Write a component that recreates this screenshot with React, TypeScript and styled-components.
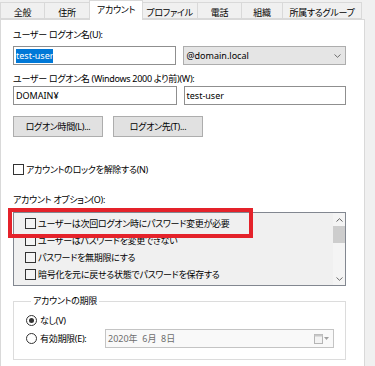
import React from 'react';
import styled, { createGlobalStyle } from 'styled-components';

const Global = createGlobalStyle`
  html, body { margin: 0; padding: 0; background: #f0f0f0; }
  body {
    font-family: "Noto Sans", "Noto Sans CJK JP", sans-serif;
    font-size: 9px;
    color: #000;
    font-feature-settings: "palt";
    letter-spacing: -0.3px;
  }
  * { box-sizing: border-box; }
`;

const Window = styled.div`
  width: 375px;
  height: 366px;
  overflow: hidden;
  background: #f0f0f0;
  display: flex;
  flex-direction: column;
`;

const TabStrip = styled.div`
  display: flex;
  align-items: flex-end;
  height: 19px;
  width: 365px;
  position: relative;
  z-index: 2;
`;

const Tab = styled.div<{ $w: number; $active?: boolean; $first?: boolean }>`
  width: ${(p) => p.$w}px;
  flex: none;
  height: ${(p) => (p.$active ? 20 : 17)}px;
  margin: 0 ${(p) => (p.$active ? -1 : 0)}px ${(p) => (p.$active ? -1 : 0)}px;
  padding-top: ${(p) => (p.$active ? 3 : 4)}px;
  line-height: 12px;
  text-align: center;
  white-space: nowrap;
  position: relative;
  z-index: ${(p) => (p.$active ? 1 : 0)};
  background: ${(p) => (p.$active ? '#fff' : '#f0f0f0')};
  border: 1px solid #d9d9d9;
  border-bottom: ${(p) => (p.$active ? 'none' : '1px solid #d9d9d9')};
  border-left: ${(p) => (p.$first || p.$active ? '1px solid #d9d9d9' : 'none')};
`;

const Panel = styled.div`
  position: relative;
  width: 365px;
  flex: 1;
  background: #fff;
  border: 1px solid #d9d9d9;
  border-bottom: none;
  padding: 9px 18px 0 12px;
  display: flex;
  flex-direction: column;
`;

const Label = styled.div<{ $mt?: number }>`
  line-height: 12px;
  height: 12px;
  margin-top: ${(p) => p.$mt ?? 0}px;
  white-space: nowrap;
`;

const Row = styled.div<{ $mt?: number; $gap?: number }>`
  display: flex;
  align-items: center;
  gap: ${(p) => p.$gap ?? 7}px;
  margin-top: ${(p) => p.$mt ?? 0}px;
`;

const TextBox = styled.div<{ $w: number }>`
  width: ${(p) => p.$w}px;
  height: 19px;
  border: 1px solid #8f8f8f;
  background: #fff;
  padding-left: 2px;
  display: flex;
  align-items: center;
  white-space: nowrap;
  letter-spacing: 0;
`;

const Selected = styled.span`
  background: #0078d7;
  color: #fff;
  line-height: 14px;
`;

const Combo = styled.div`
  width: 163px;
  height: 19px;
  border: 1px solid #adadad;
  background: #e5e5e5;
  padding: 0 4px 0 2px;
  display: flex;
  align-items: center;
  justify-content: space-between;
  letter-spacing: 0;
`;

const Button = styled.div`
  width: 90px;
  height: 21px;
  border: 1px solid #adadad;
  background: #e1e1e1;
  display: flex;
  align-items: center;
  justify-content: center;
  white-space: nowrap;
`;

const CheckRow = styled.div<{ $mt?: number }>`
  display: flex;
  align-items: center;
  gap: 2px;
  height: 13px;
  margin-top: ${(p) => p.$mt ?? 0}px;
  white-space: nowrap;
`;

const Box = styled.span`
  width: 11px;
  height: 11px;
  flex: none;
  border: 1px solid #333;
  background: #fff;
`;

const ListBox = styled.div`
  position: relative;
  margin-top: 6px;
  width: 333px;
  height: 74px;
  border: 1px solid #828790;
  background: #f0f0f0;
  display: flex;
`;

const Items = styled.div`
  flex: 1;
  padding-top: 2px;
  overflow: hidden;
`;

const Item = styled.div`
  height: 17px;
  display: flex;
  align-items: center;
  gap: 2px;
  padding-left: 11px;
  white-space: nowrap;
`;

const ListBoxCheck = styled.span`
  width: 11px;
  height: 11px;
  flex: none;
  border: 1px solid #333;
  background: #f4f4f4;
`;

const ScrollBar = styled.div`
  width: 12px;
  flex: none;
  background: #f4f4f4;
  display: flex;
  flex-direction: column;
  align-items: center;
  justify-content: space-between;
`;

const ScrollArrow = styled.div`
  height: 13px;
  width: 12px;
  display: flex;
  align-items: center;
  justify-content: center;
`;

const Thumb = styled.div`
  width: 12px;
  height: 17px;
  background: #cdcdcd;
`;

const ScrollTrack = styled.div`
  flex: 1;
  width: 12px;
  display: flex;
  flex-direction: column;
`;

const Highlight = styled.div`
  position: absolute;
  left: -6px;
  top: -5px;
  width: 245px;
  height: 30px;
  border: 4px solid #e4222a;
  z-index: 3;
  pointer-events: none;
`;

const Group = styled.fieldset`
  margin: 9px 0 0 0;
  padding: 0 11px 11px 12px;
  width: 333px;
  min-width: 0;
  border: 1px solid #dcdcdc;
`;

const Legend = styled.legend`
  margin-left: 5px;
  padding: 0 2px;
  line-height: 12px;
`;

const RadioRow = styled.div<{ $mt?: number }>`
  display: flex;
  align-items: center;
  margin-top: ${(p) => p.$mt ?? 0}px;
  white-space: nowrap;
`;

const Radio = styled.span<{ $checked?: boolean }>`
  width: 11px;
  height: 11px;
  flex: none;
  border-radius: 50%;
  border: 1px solid #333;
  background: #fff;
  margin-right: 3px;
  display: flex;
  align-items: center;
  justify-content: center;
  &::after {
    content: '';
    display: ${(p) => (p.$checked ? 'block' : 'none')};
    width: 5px;
    height: 5px;
    border-radius: 50%;
    background: #333;
  }
`;

const RadioText = styled.span`
  line-height: 13px;
`;

const DateField = styled.div`
  margin-left: auto;
  width: 229px;
  height: 19px;
  border: 1px solid #c4c4c4;
  background: #f9f9f9;
  color: #6d6d6d;
  padding: 0 4px 0 2px;
  display: flex;
  align-items: center;
  justify-content: space-between;
  white-space: pre;
  letter-spacing: 0;
`;

const DateIcon = styled.div`
  display: flex;
  align-items: center;
  gap: 1px;
`;

const Chevron = () => (
  <svg width="7" height="4" viewBox="0 0 7 4">
    <path d="M0.5 0.5 L3.5 3.3 L6.5 0.5" fill="none" stroke="#606060" strokeWidth="0.9" />
  </svg>
);

const ArrowUp = () => (
  <svg width="7" height="4" viewBox="0 0 7 4">
    <path d="M0.5 3.5 L3.5 0.7 L6.5 3.5" fill="none" stroke="#606060" strokeWidth="1" />
  </svg>
);

const Calendar = () => (
  <svg width="9" height="10" viewBox="0 0 9 10">
    <rect x="0.5" y="0.5" width="8" height="9" fill="#f3f3f3" stroke="#b5b5b5" />
    <rect x="0.5" y="0.5" width="8" height="2" fill="#c8c8c8" />
  </svg>
);

const DropTri = () => (
  <svg width="5" height="3" viewBox="0 0 5 3">
    <path d="M0 0 L5 0 L2.5 3 Z" fill="#a0a0a0" />
  </svg>
);

const tabs: { label: string; w: number; active?: boolean }[] = [
  { label: '全般', w: 45 },
  { label: '住所', w: 45 },
  { label: 'アカウント', w: 54, active: true },
  { label: 'プロファイル', w: 56 },
  { label: '電話', w: 44 },
  { label: '組織', w: 41 },
  { label: '所属するグループ', w: 79 },
];

const options = [
  'ユーザーは次回ログオン時にパスワード変更が必要',
  'ユーザーはパスワードを変更できない',
  'パスワードを無期限にする',
  '暗号化を元に戻せる状態でパスワードを保存する',
];

export default function App() {
  return (
    <Window>
      <Global />
      <TabStrip>
        {tabs.map((t, i) => (
          <Tab key={t.label} $w={t.w} $active={t.active} $first={i === 0}>
            {t.label}
          </Tab>
        ))}
      </TabStrip>
      <Panel>
        <Label>ユーザー ログオン名(U):</Label>
        <Row $mt={5}>
          <TextBox $w={164}>
            <Selected>test-user</Selected>
          </TextBox>
          <Combo>
            <span>@domain.local</span>
            <Chevron />
          </Combo>
        </Row>
        <Label $mt={8}>ユーザー ログオン名 (Windows 2000 より前)(W):</Label>
        <Row $mt={1}>
          <TextBox $w={164}>DOMAIN¥</TextBox>
          <TextBox $w={163}>test-user</TextBox>
        </Row>
        <Row $mt={11} $gap={10}>
          <Button>ログオン時間(L)...</Button>
          <Button>ログオン先(T)...</Button>
        </Row>
        <CheckRow $mt={26}>
          <Box />
          <span>アカウントのロックを解除する(N)</span>
        </CheckRow>
        <Label $mt={18}>アカウント オプション(O):</Label>
        <ListBox>
          <Items>
            {options.map((o) => (
              <Item key={o}>
                <ListBoxCheck />
                <span>{o}</span>
              </Item>
            ))}
          </Items>
          <ScrollBar>
            <ScrollTrack>
              <ScrollArrow>
                <ArrowUp />
              </ScrollArrow>
              <Thumb />
            </ScrollTrack>
            <ScrollArrow>
              <Chevron />
            </ScrollArrow>
          </ScrollBar>
          <Highlight />
        </ListBox>
        <Group>
          <Legend>アカウントの期限</Legend>
          <RadioRow $mt={7}>
            <Radio $checked />
            <RadioText>なし(V)</RadioText>
          </RadioRow>
          <RadioRow $mt={2}>
            <Radio />
            <RadioText>有効期限(E):</RadioText>
            <DateField>
              <span>2020年  6月  8日</span>
              <DateIcon>
                <Calendar />
                <DropTri />
              </DateIcon>
            </DateField>
          </RadioRow>
        </Group>
      </Panel>
    </Window>
  );
}
